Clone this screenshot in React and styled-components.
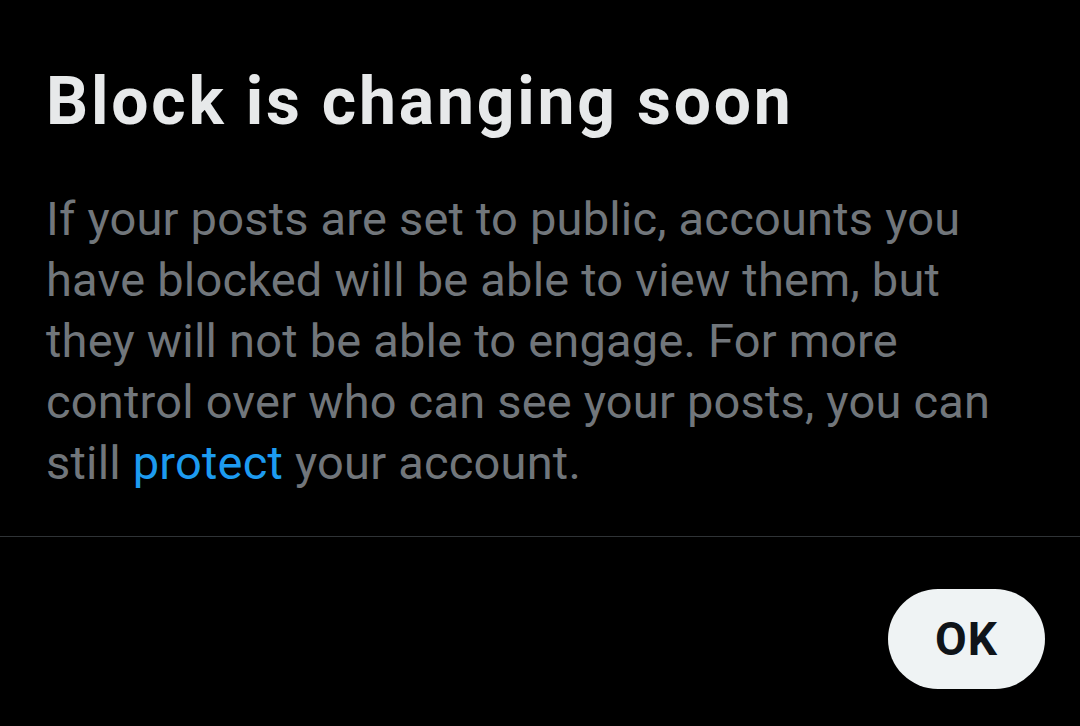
import React from "react";
import styled, { createGlobalStyle } from "styled-components";

const Global = createGlobalStyle`
  html, body {
    margin: 0;
    background: #000;
  }
  body {
    font-family: Roboto, "Noto Sans", sans-serif;
    -webkit-font-smoothing: antialiased;
  }
`;

const Sheet = styled.div`
  width: 1080px;
  height: 726px;
  background: #000;
  display: flex;
  flex-direction: column;
  overflow: hidden;
`;

const Content = styled.div`
  padding: 62px 46px 43px;
  display: flex;
  flex-direction: column;
  gap: 47px;
`;

const Title = styled.h1`
  margin: 0;
  font-size: 66px;
  line-height: 79px;
  font-weight: 700;
  color: #e7e9ea;
  letter-spacing: 2.8px;
`;

const Body = styled.p`
  margin: 0;
  max-width: 960px;
  font-size: 47px;
  line-height: 61px;
  font-weight: 400;
  color: #71767b;
  letter-spacing: 0.2px;
`;

const Link = styled.a`
  color: #1d9bf0;
  text-decoration: none;
`;

const Divider = styled.hr`
  margin: 0;
  border: 0;
  height: 1px;
  background: #2f3336;
`;

const Footer = styled.div`
  display: flex;
  justify-content: flex-end;
  padding: 52px 35px 0;
`;

const Button = styled.button`
  width: 157px;
  height: 100px;
  border: 0;
  border-radius: 50px;
  background: #eff3f4;
  color: #0f1419;
  font-family: Roboto, "Noto Sans", sans-serif;
  font-size: 46px;
  font-weight: 700;
  letter-spacing: 1px;
  cursor: pointer;
`;

export default function App() {
  return (
    <Sheet>
      <Global />
      <Content>
        <Title>Block is changing soon</Title>
        <Body>
          If your posts are set to public, accounts you have blocked will be
          able to view them, but they will not be able to engage. For more
          control over who can see your posts, you can still{" "}
          <Link href="#">protect</Link> your account.
        </Body>
      </Content>
      <Divider />
      <Footer>
        <Button>OK</Button>
      </Footer>
    </Sheet>
  );
}
